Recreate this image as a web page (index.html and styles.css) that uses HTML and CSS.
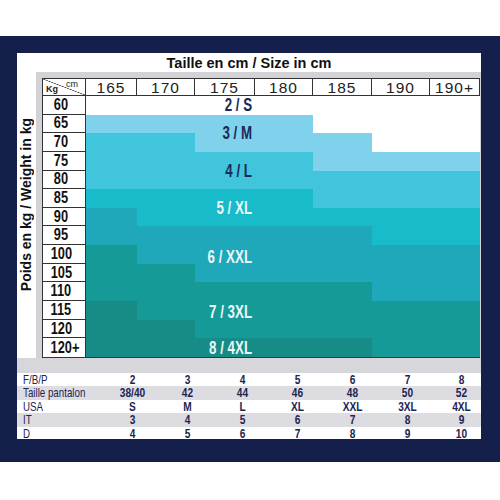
FILE: index.html
```html
<!DOCTYPE html>
<html lang="fr">
<head>
  <meta charset="UTF-8" />
  <meta name="viewport" content="width=device-width, initial-scale=1.0" />
  <title>Guide des tailles</title>
  <link rel="stylesheet" href="styles.css">
</head>
<body>
  <div class="frame">
    <div class="sheet">
      <div class="title">Taille en cm / Size in cm</div>

      <div class="middle">
        <div class="side"><span class="side-label">Poids en kg / Weight in kg</span></div>

        <div class="board">
          <div class="chart">
            <div class="head corner"><span class="kg">Kg</span><span class="cm">cm</span></div>
            <div class="head">165</div>
            <div class="head">170</div>
            <div class="head">175</div>
            <div class="head">180</div>
            <div class="head">185</div>
            <div class="head">190</div>
            <div class="head">190+</div>

            <div class="bands">
              <!-- 60 -->
              <i class="s2"></i><i class="s2"></i><i class="s2"></i><i class="s2"></i><i class="s2"></i><i class="s2"></i><i class="s2"></i>
              <!-- 65 -->
              <i class="s3"></i><i class="s3"></i><i class="s3"></i><i class="s3"></i><i class="s2"></i><i class="s2"></i><i class="s2"></i>
              <!-- 70 -->
              <i class="s4"></i><i class="s4"></i><i class="s3"></i><i class="s3"></i><i class="s3"></i><i class="s2"></i><i class="s2"></i>
              <!-- 75 -->
              <i class="s4"></i><i class="s4"></i><i class="s4"></i><i class="s4"></i><i class="s3"></i><i class="s3"></i><i class="s3"></i>
              <!-- 80 -->
              <i class="s4"></i><i class="s4"></i><i class="s4"></i><i class="s4"></i><i class="s4"></i><i class="s4"></i><i class="s4"></i>
              <!-- 85 -->
              <i class="s5"></i><i class="s5"></i><i class="s5"></i><i class="s5"></i><i class="s4"></i><i class="s4"></i><i class="s4"></i>
              <!-- 90 -->
              <i class="s6"></i><i class="s5"></i><i class="s5"></i><i class="s5"></i><i class="s5"></i><i class="s5"></i><i class="s5"></i>
              <!-- 95 -->
              <i class="s6"></i><i class="s6"></i><i class="s6"></i><i class="s6"></i><i class="s6"></i><i class="s5"></i><i class="s5"></i>
              <!-- 100 -->
              <i class="s7"></i><i class="s6"></i><i class="s6"></i><i class="s6"></i><i class="s6"></i><i class="s6"></i><i class="s6"></i>
              <!-- 105 -->
              <i class="s7"></i><i class="s7"></i><i class="s6"></i><i class="s6"></i><i class="s6"></i><i class="s6"></i><i class="s6"></i>
              <!-- 110 -->
              <i class="s7"></i><i class="s7"></i><i class="s7"></i><i class="s7"></i><i class="s7"></i><i class="s6"></i><i class="s6"></i>
              <!-- 115 -->
              <i class="s8"></i><i class="s7"></i><i class="s7"></i><i class="s7"></i><i class="s7"></i><i class="s7"></i><i class="s7"></i>
              <!-- 120 -->
              <i class="s8"></i><i class="s8"></i><i class="s7"></i><i class="s7"></i><i class="s7"></i><i class="s7"></i><i class="s7"></i>
              <!-- 120+ -->
              <i class="s8"></i><i class="s8"></i><i class="s8"></i><i class="s8"></i><i class="s8"></i><i class="s7"></i><i class="s7"></i>
            </div>

            <div class="labels">
              <span class="size dark l2">2 / S</span>
              <span class="size dark l3">3 / M</span>
              <span class="size dark l4">4 / L</span>
              <span class="size l5">5 / XL</span>
              <span class="size l6">6 / XXL</span>
              <span class="size l7">7 / 3XL</span>
              <span class="size l8">8 / 4XL</span>
            </div>

            <div class="weight"><span>60</span></div>
            <div class="weight"><span>65</span></div>
            <div class="weight"><span>70</span></div>
            <div class="weight"><span>75</span></div>
            <div class="weight"><span>80</span></div>
            <div class="weight"><span>85</span></div>
            <div class="weight"><span>90</span></div>
            <div class="weight"><span>95</span></div>
            <div class="weight"><span>100</span></div>
            <div class="weight"><span>105</span></div>
            <div class="weight"><span>110</span></div>
            <div class="weight"><span>115</span></div>
            <div class="weight"><span>120</span></div>
            <div class="weight last"><span class="plus">120+</span></div>
          </div>
        </div>
      </div>

      <div class="spacer"></div>

      <div class="sizes">
        <div class="line"><span>F/B/P</span><b>2</b><b>3</b><b>4</b><b>5</b><b>6</b><b>7</b><b>8</b></div>
        <div class="line grey"><span>Taille pantalon</span><b>38/40</b><b>42</b><b>44</b><b>46</b><b>48</b><b>50</b><b>52</b></div>
        <div class="line"><span>USA</span><b>S</b><b>M</b><b>L</b><b>XL</b><b>XXL</b><b>3XL</b><b>4XL</b></div>
        <div class="line grey"><span>IT</span><b>3</b><b>4</b><b>5</b><b>6</b><b>7</b><b>8</b><b>9</b></div>
        <div class="line"><span>D</span><b>4</b><b>5</b><b>6</b><b>7</b><b>8</b><b>9</b><b>10</b></div>
      </div>
    </div>
  </div>
</body>
</html>
```

FILE: styles.css
```css
body {
  margin: 0;
  background-color: white;
  font-family: "Liberation Sans", Arial, sans-serif;
}

.frame {
  margin-top: 36px;
  height: 426px;
  box-sizing: border-box;
  padding: 17px 19px 0 17px;
  background-color: #141f4b;
}

.sheet {
  background-color: white;
  height: 386px;
}

.title {
  height: 19px;
  line-height: 20px;
  text-align: center;
  font-weight: bold;
  font-size: 14.5px;
  color: #111;
}

.middle {
  display: flex;
  height: 286px;
}

.side {
  width: 19px;
  display: flex;
  justify-content: center;
}

.side-label {
  writing-mode: vertical-rl;
  transform: rotate(180deg);
  margin-top: 46px;
  align-self: flex-start;
  font-weight: bold;
  font-size: 14px;
  line-height: 19px;
  color: #111;
  white-space: nowrap;
}

.board {
  flex: 1;
  background-color: #d2d2d7;
  padding: 6px 1px 0 6px;
}

.chart {
  display: grid;
  grid-template-columns: 43px 51px 58px 60px 58px 59px 58px 50px;
  grid-template-rows: 17px repeat(14, minmax(0, 1fr));
  height: 280px;
  box-sizing: border-box;
  border-top: 1px solid #333;
  border-bottom: 1px solid #2a3350;
  border-left: 1px solid #333;
  background-color: white;
}

.head {
  border-right: 1px solid #333;
  border-bottom: 1px solid #333;
  text-align: center;
  font-size: 15.5px;
  letter-spacing: 1px;
  line-height: 17px;
  color: #222;
}

.corner {
  display: flex;
  justify-content: space-between;
  padding: 0 7px 0 3px;
  letter-spacing: 0;
  font-size: 9px;
  background: linear-gradient(to top right, transparent calc(50% - 0.6px), #333 50%, transparent calc(50% + 0.6px));
}

.corner .kg {
  align-self: flex-end;
  font-weight: bold;
  line-height: 12px;
}

.corner .cm {
  align-self: flex-start;
  line-height: 10px;
}

.weight {
  grid-column: 1;
  border-right: 1px solid #333;
  border-bottom: 1px solid #333;
  display: flex;
  align-items: center;
  justify-content: center;
  padding-right: 6px;
  font-weight: bold;
  font-size: 16px;
  line-height: 16px;
  color: #111;
  overflow: hidden;
}

.weight span {
  display: inline-block;
  transform: scaleX(0.8);
}

.weight.last {
  border-bottom: none;
}

.weight .plus {
  margin-right: -9px;
}

.bands,
.labels {
  grid-column: 2 / -1;
  grid-row: 2 / -1;
  display: grid;
  grid-template-columns: 51px 58px 60px 58px 59px 58px 50px;
  grid-template-rows: repeat(14, minmax(0, 1fr));
}

.s2 { background-color: white; }
.s3 { background-color: #80d2ec; }
.s4 { background-color: #40c5dc; }
.s5 { background-color: #18bbca; }
.s6 { background-color: #1ea8ba; }
.s7 { background-color: #159a97; }
.s8 { background-color: #178b86; }

.size {
  grid-column: 3;
  justify-self: end;
  align-self: center;
  margin-right: 3px;
  transform: scaleX(0.74);
  transform-origin: right center;
  font-weight: bold;
  font-size: 18px;
  line-height: 18px;
  color: #eaf7f8;
  white-space: nowrap;
}

.size.dark {
  color: #1c2858;
}

.l2 { grid-row: 1 / 2; }
.l3 { grid-row: 2 / 4; }
.l4 { grid-row: 4 / 6; }
.l5 { grid-row: 6 / 8; }
.l6 { grid-row: 8 / 11; margin-top: 5px; }
.l7 { grid-row: 11 / 14; margin-top: 3px; }
.l8 { grid-row: 14 / 15; }

.spacer {
  height: 15px;
  background-color: #d6d6db;
}

.line {
  display: grid;
  grid-template-columns: 88px repeat(6, 55px) 46px;
  height: 13px;
  line-height: 13px;
  font-size: 13px;
  color: #1d2552;
}

.line.grey {
  height: 14px;
  line-height: 14px;
  background-color: #dcdce1;
}

.line span {
  padding-left: 8px;
  white-space: nowrap;
  transform: scaleX(0.75);
  transform-origin: left center;
}

.line b {
  text-align: center;
  transform: scaleX(0.78);
}

.line b:last-child {
  padding-left: 9px;
}
```
